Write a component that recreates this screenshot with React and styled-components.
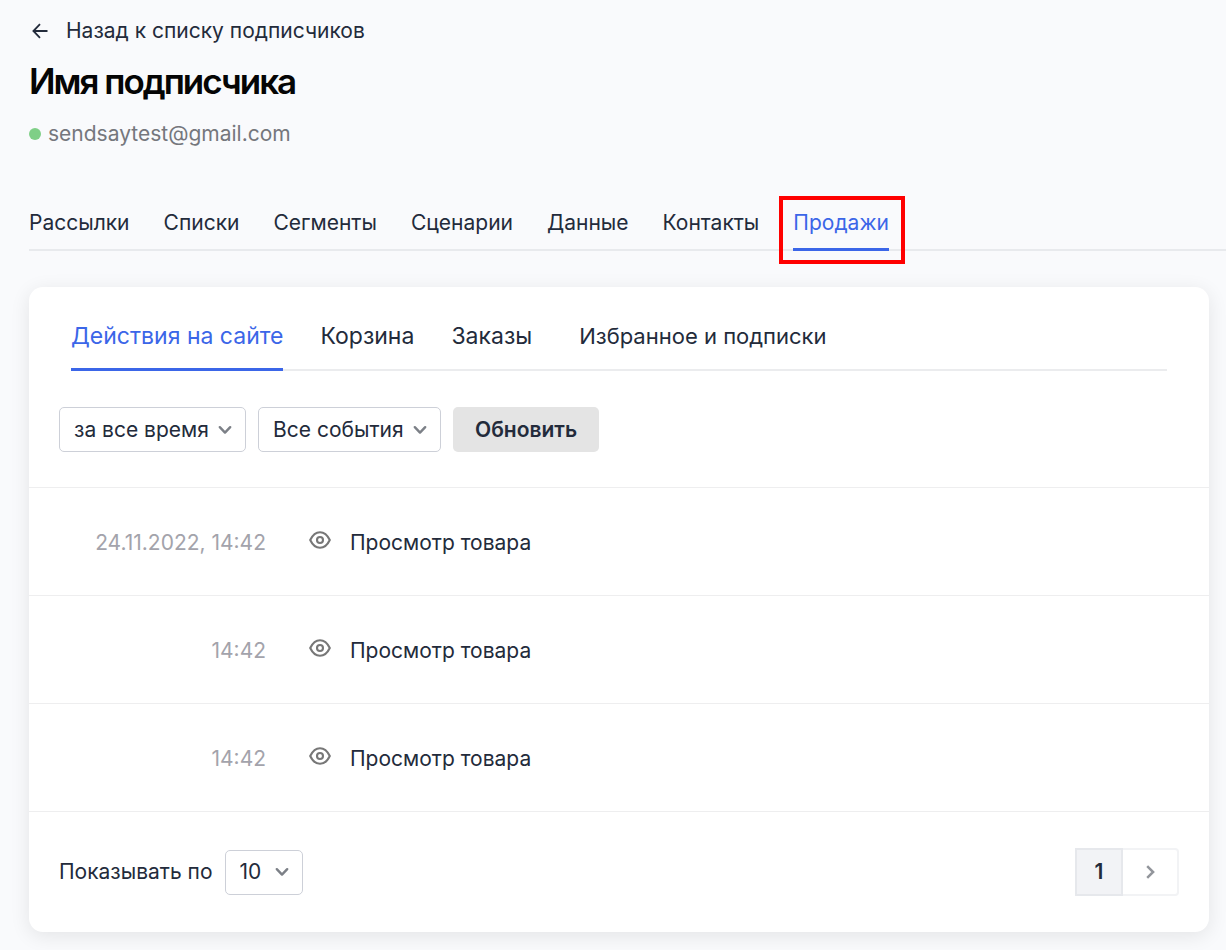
import React from 'react';
import styled, { createGlobalStyle } from 'styled-components';

const GlobalStyle = createGlobalStyle`
  * {
    box-sizing: border-box;
  }
  body {
    margin: 0;
    background: #f9fafc;
    color: #232b3b;
    font-family: Inter, "Liberation Sans", sans-serif;
    font-size: 21px;
    line-height: 28px;
  }
  button, select {
    font: inherit;
    color: inherit;
  }
`;

const tabs = ['Рассылки', 'Списки', 'Сегменты', 'Сценарии', 'Данные', 'Контакты', 'Продажи'];

const events = [
  { id: 1, date: '24.11.2022, 14:42', title: 'Просмотр товара' },
  { id: 2, date: '14:42', title: 'Просмотр товара' },
  { id: 3, date: '14:42', title: 'Просмотр товара' },
];

const ArrowLeft = () => (
  <svg width="16" height="16" viewBox="0 0 16 16" fill="none" stroke="currentColor" strokeWidth="1.8">
    <path d="M15.5 8H1.5M8 1.2L1.4 8L8 14.8" />
  </svg>
);

const ChevronDown = () => (
  <svg width="14" height="10" viewBox="0 0 14 10" fill="none" stroke="currentColor" strokeWidth="2.4" strokeLinecap="round" strokeLinejoin="round">
    <path d="M1.8 2.2L7 7.6L12.2 2.2" />
  </svg>
);

const ChevronRight = () => (
  <svg width="10" height="14" viewBox="0 0 10 14" fill="none" stroke="currentColor" strokeWidth="2.5">
    <path d="M2.2 1.2L8.1 7L2.2 12.8" />
  </svg>
);

const Eye = () => (
  <svg width="22" height="18" viewBox="0 0 22 18" fill="none" stroke="currentColor" strokeWidth="2.1" strokeLinejoin="round">
    <path d="M1.2 9C3.6 4 7 1.2 11 1.2S18.4 4 20.8 9C18.4 14 15 16.8 11 16.8S3.6 14 1.2 9Z" />
    <circle cx="11" cy="9" r="3" />
  </svg>
);

function Dropdown({ id, value, label }) {
  return (
    <SelectBox>
      <Select id={id} aria-label={label} defaultValue={value}>
        <option>{value}</option>
      </Select>
      <ChevronDown />
    </SelectBox>
  );
}

export default function App() {
  return (
    <Page>
      <GlobalStyle />
      <Header>
        <BackLink href="#subscribers">
          <ArrowLeft />
          Назад к списку подписчиков
        </BackLink>
        <Title>Имя подписчика</Title>
        <Email>
          <Status />
          sendsaytest@gmail.com
        </Email>
      </Header>
      <Tabs>
        {tabs.map((tab) => (
          <Tab key={tab} href="#" $active={tab === 'Продажи'}>{tab}</Tab>
        ))}
      </Tabs>
      <Card>
        <SubTabs>
          <SubTab href="#" $active>Действия на сайте</SubTab>
          <SubTab href="#">Корзина</SubTab>
          <SubTab href="#">Заказы</SubTab>
          <SubTab href="#" $small>Избранное и подписки</SubTab>
        </SubTabs>
        <Filters>
          <Dropdown label="Период" value="за все время" />
          <Dropdown label="События" value="Все события" />
          <RefreshButton type="button">Обновить</RefreshButton>
        </Filters>
        <EventList>
          {events.map((event) => (
            <EventRow key={event.id}>
              <EventDate>{event.date}</EventDate>
              <EventIcon><Eye /></EventIcon>
              <span>{event.title}</span>
            </EventRow>
          ))}
        </EventList>
        <Footer>
          <PageSize>
            <label htmlFor="page-size">Показывать по</label>
            <Dropdown id="page-size" value="10" />
          </PageSize>
          <Pagination aria-label="Страницы">
            <PageButton type="button" $current>1</PageButton>
            <PageButton type="button" aria-label="Следующая страница"><ChevronRight /></PageButton>
          </Pagination>
        </Footer>
      </Card>
    </Page>
  );
}

const Page = styled.main`
  padding: 17px 0 18px 29px;
`;

const Header = styled.header`
  display: flex;
  flex-direction: column;
  align-items: flex-start;
`;

const BackLink = styled.a`
  display: flex;
  align-items: center;
  gap: 18px;
  padding-left: 3px;
  color: inherit;
  text-decoration: none;
`;

const Title = styled.h1`
  margin: 14px 0 0;
  color: #050505;
  font-size: 35px;
  line-height: 44px;
  font-weight: 600;
  letter-spacing: -2px;
`;

const Email = styled.div`
  display: flex;
  align-items: center;
  gap: 7px;
  margin-top: 17px;
  color: #75777d;
`;

const Status = styled.span`
  width: 12px;
  height: 12px;
  border-radius: 50%;
  background: #7fcf87;
`;

const Tabs = styled.nav`
  display: flex;
  gap: 34px;
  margin-top: 61px;
  border-bottom: 2px solid #e8eaed;
`;

const Tab = styled.a`
  position: relative;
  margin-bottom: -2px;
  padding-bottom: 11px;
  border-bottom: 3px solid ${({ $active }) => ($active ? '#3b66e8' : 'transparent')};
  color: ${({ $active }) => ($active ? '#3b66e8' : 'inherit')};
  text-decoration: none;

  &::after {
    content: '';
    display: ${({ $active }) => ($active ? 'block' : 'none')};
    position: absolute;
    inset: -13px -16px -16px -14px;
    border: 4px solid #ff0000;
  }
`;

const Card = styled.section`
  margin: 36px 17px 0 0;
  border-radius: 14px;
  background: #fff;
  box-shadow: 0 4px 20px rgba(0, 0, 0, 0.09);
`;

const SubTabs = styled.nav`
  display: flex;
  gap: 37px;
  margin: 0 42px;
  padding-top: 35px;
  border-bottom: 2px solid #ebecee;
`;

const SubTab = styled.a`
  margin-bottom: -2px;
  margin-left: ${({ $small }) => ($small ? '10px' : '0')};
  padding-bottom: 18px;
  border-bottom: 3px solid ${({ $active }) => ($active ? '#3b66e8' : 'transparent')};
  color: ${({ $active }) => ($active ? '#3b66e8' : 'inherit')};
  font-size: ${({ $small }) => ($small ? '22px' : '23px')};
  text-decoration: none;
`;

const Filters = styled.div`
  display: flex;
  gap: 12px;
  padding: 36px 30px 35px;
`;

const SelectBox = styled.span`
  display: inline-grid;
  align-items: center;
  color: #7c8087;

  > * {
    grid-area: 1 / 1;
  }
  > svg {
    justify-self: end;
    margin-right: 14px;
    pointer-events: none;
  }
`;

const Select = styled.select`
  appearance: none;
  min-width: 78px;
  height: 45px;
  padding: 0 36px 0 14px;
  border: 1px solid #cdd0d8;
  border-radius: 5px;
  background: #fff;
  color: #232b3b;
`;

const RefreshButton = styled.button`
  height: 45px;
  padding: 0 22px;
  border: 0;
  border-radius: 5px;
  background: #e4e4e4;
  font-weight: 600;
`;

const EventList = styled.ul`
  margin: 0;
  padding: 0;
  list-style: none;
`;

const EventRow = styled.li`
  display: flex;
  align-items: center;
  height: 108px;
  padding: 2px 30px 0;
  border-top: 1px solid #eeeeef;
`;

const EventDate = styled.time`
  width: 207px;
  color: #a3a3ab;
  text-align: right;
`;

const EventIcon = styled.span`
  display: flex;
  margin: 0 19px 6px 43px;
  color: #777;
`;

const Footer = styled.footer`
  display: flex;
  align-items: center;
  justify-content: space-between;
  padding: 36px 30px 36px;
  border-top: 1px solid #eeeeef;
`;

const PageSize = styled.div`
  display: flex;
  align-items: center;
  gap: 12px;
`;

const Pagination = styled.nav`
  display: flex;
`;

const PageButton = styled.button`
  display: flex;
  align-items: center;
  justify-content: center;
  width: ${({ $current }) => ($current ? '48px' : '56px')};
  height: 48px;
  padding: 0;
  border: 2px solid ${({ $current }) => ($current ? '#e6e8ec' : '#f2f3f5')};
  border-left-width: ${({ $current }) => ($current ? '2px' : '0')};
  border-radius: ${({ $current }) => ($current ? '0' : '0 4px 4px 0')};
  background: ${({ $current }) => ($current ? '#f2f3f6' : '#fff')};
  color: ${({ $current }) => ($current ? '#232b3b' : '#92959b')};
  font-weight: 600;
`;
